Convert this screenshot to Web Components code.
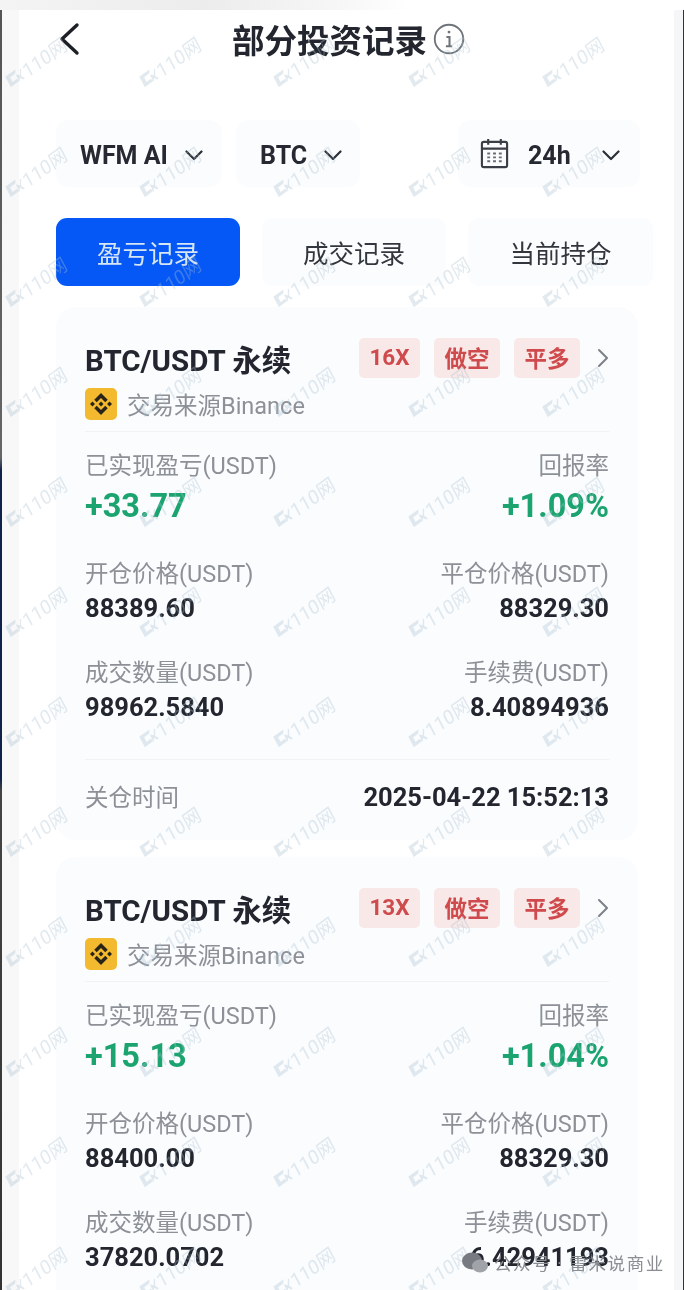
<!DOCTYPE html>
<html lang="zh">
<head>
<meta charset="utf-8">
<title>部分投资记录</title>
<style>
    html, body { margin: 0; height: 1290px; overflow: hidden; background: #f6f7f8; }
    body { font-family: Roboto, "Noto Sans CJK SC", sans-serif; color: #23262e; }
    .page { filter: blur(.7px); }
</style>
</head>
<body>
<div class="page">
<app-frame>
    <nav-header>部分投资记录</nav-header>
    <filter-bar>
        <filter-pill width="166" pad="24" gap="17">WFM AI</filter-pill>
        <filter-pill width="124" pad="24" gap="17">BTC</filter-pill>
        <filter-pill width="182" pad="22" gap="31" calendar style="margin-left:auto">24h</filter-pill>
    </filter-bar>
    <tab-bar>
        <tab-item active>盈亏记录</tab-item>
        <tab-item>成交记录</tab-item>
        <tab-item>当前持仓</tab-item>
    </tab-bar>
    <record-card leverage="16X" pnl="+33.77" rate="+1.09%" open="88389.60" close="88329.30" qty="98962.5840" fee="8.40894936" time="2025-04-22 15:52:13"></record-card>
    <record-card leverage="13X" pnl="+15.13" rate="+1.04%" open="88400.00" close="88329.30" qty="37820.0702" fee="6.42941193" time="2025-04-22 15:52:13"></record-card>
</app-frame>
<water-marks></water-marks>
<source-stamp>公众号 · 雷米说商业</source-stamp>
</div>

<script>
const chevronDown = `<svg width="18" height="11" viewBox="0 0 18 11" fill="none" stroke="#2b2f37" stroke-width="2.2" stroke-linecap="round" stroke-linejoin="round"><path d="M1.5 1.5 9 9l7.5-7.5"/></svg>`;

class AppFrame extends HTMLElement {
    constructor() {
        super();
        this.attachShadow({ mode: 'open' }).innerHTML = `
            <style>
                :host { display: block; height: 1290px; overflow: hidden; }
                .top { height: 10px; background: linear-gradient(90deg, #f4f4f4, #ececec 30%, #f7f7f7 50%, #fff 60%); }
                .body { display: flex; height: 1280px; }
                .left { width: 19px; background: #f8f8f9; border-left: 2px solid; box-sizing: border-box;
                    border-image: linear-gradient(#555 0, #666 35%, #10224a 36%, #10224a 60%, #444 61%, #333 100%) 1; }
                .main { width: 655px; box-sizing: border-box; padding: 0 21px 0 37px; background: #fff; }
                .right { width: 10px; background: #f5f6f7; border-right: 1px solid #333; box-sizing: border-box; }
            </style>
            <div class="top"></div>
            <div class="body">
                <div class="left"></div>
                <div class="main"><slot></slot></div>
                <div class="right"></div>
            </div>`;
    }
}

class NavHeader extends HTMLElement {
    constructor() {
        super();
        this.attachShadow({ mode: 'open' }).innerHTML = `
            <style>
                :host { display: grid; grid-template-columns: 176px auto; align-items: center; height: 62px; margin-bottom: 48px; }
                .back { padding-left: 1px; margin-bottom: 5px; display: flex; }
                .title { display: flex; align-items: center; gap: 6px; margin-bottom: 5px; font-size: 32.5px; font-weight: 700; color: #23262e; }
            </style>
            <div class="back">
                <svg width="24" height="34" viewBox="0 0 24 34" fill="none" stroke="#1d2026" stroke-width="3.4" stroke-linecap="round" stroke-linejoin="round"><path d="M20 3 5 17l15 14"/></svg>
            </div>
            <div class="title">
                <slot></slot>
                <svg width="32" height="32" viewBox="0 0 31 31" fill="none" stroke="#6f747b"><circle cx="15.5" cy="15.5" r="13.8" stroke-width="1.8"/><path d="M13 13.5h3v9M12.5 22.5h6" stroke-width="2"/><circle cx="15.5" cy="8.8" r="1.4" fill="#6f747b" stroke="none"/></svg>
            </div>`;
    }
}

class FilterBar extends HTMLElement {
    constructor() {
        super();
        this.attachShadow({ mode: 'open' }).innerHTML = `
            <style>
                :host { display: flex; gap: 14px; height: 67px; margin: 0 13px 31px 0; }
            </style>
            <slot></slot>`;
    }
}

class FilterPill extends HTMLElement {
    constructor() {
        super();
        const calendar = this.hasAttribute('calendar') ? `
            <svg style="margin-right:19px;margin-bottom:3px" width="29" height="31" viewBox="0 0 29 32" fill="none" stroke="#3a3e46" stroke-width="2.2">
                <rect x="1.5" y="4" width="26" height="26" rx="2"/>
                <path d="M1.5 11h26M8 1v6M21 1v6"/>
                <path d="M7 16h3M13 16h3M19 16h3M7 20h3M13 20h3M19 20h3M7 24h3M13 24h3M19 24h3" stroke-width="2" stroke="#6a6e75"/>
            </svg>` : '';
        this.attachShadow({ mode: 'open' }).innerHTML = `
            <style>
                :host { display: flex; align-items: center; box-sizing: border-box; border-radius: 13px; background: #fbfcfd;
                    width: ${this.getAttribute('width')}px; padding: 3px 0 0 ${this.getAttribute('pad')}px;
                    font-size: 25px; font-weight: 700; color: #262932; }
                svg.down { margin-left: ${this.getAttribute('gap')}px; }
            </style>
            ${calendar}<slot></slot>${chevronDown.replace('<svg', '<svg class="down"')}`;
    }
}

class TabBar extends HTMLElement {
    constructor() {
        super();
        this.attachShadow({ mode: 'open' }).innerHTML = `
            <style>
                :host { display: grid; grid-template-columns: 184px 184px 185px; gap: 22px; height: 68px; margin-bottom: 21px; }
            </style>
            <slot></slot>`;
    }
}

class TabItem extends HTMLElement {
    constructor() {
        super();
        this.attachShadow({ mode: 'open' }).innerHTML = `
            <style>
                :host { display: flex; align-items: center; justify-content: center; border-radius: 11px; padding-bottom: 2px; box-sizing: border-box;
                    background: #fbfcfd; color: #33363d; font-size: 25.5px; }
                :host([active]) { background: #0558f5; color: #d6e6f5; }
            </style>
            <slot></slot>`;
    }
}

class TradeTag extends HTMLElement {
    constructor() {
        super();
        this.attachShadow({ mode: 'open' }).innerHTML = `
            <style>
                :host { display: flex; align-items: center; justify-content: center; height: 40px; border-radius: 5px; box-sizing: border-box; padding-bottom: 2px;
                    background: #f8e8e8; color: #cf4a4c; font-size: 22.5px; font-weight: 700; }
            </style>
            <slot></slot>`;
    }
}

class StatCell extends HTMLElement {
    constructor() {
        super();
        this.attachShadow({ mode: 'open' }).innerHTML = `
            <style>
                :host { display: block; }
                :host([end]) { text-align: right; }
                .label { height: 32px; line-height: 32px; font-size: 23.5px; color: #8d9096; white-space: nowrap; }
                .value { height: 35px; line-height: 37px; font-size: 25.5px; font-weight: 700; color: #23262e; white-space: nowrap; }
                :host([big]) .value { height: 44px; line-height: 48px; font-size: 32.5px; color: #1ba46f; }
            </style>
            <div class="label"><slot name="label"></slot></div>
            <div class="value"><slot name="value"></slot></div>`;
    }
}

class RecordCard extends HTMLElement {
    constructor() {
        super();
        this.attachShadow({ mode: 'open' });
    }

    connectedCallback() {
        const a = name => this.getAttribute(name);
        const cell = (label, value, attrs = '') =>
            `<stat-cell ${attrs}><span slot="label">${label}</span><span slot="value">${value}</span></stat-cell>`;
        this.shadowRoot.innerHTML = `
            <style>
                :host { display: block; box-sizing: border-box; width: 582px; height: 533px; margin-bottom: 17px;
                    padding: 31px 29px 0; border-radius: 20px; background: #fafcfe; }
                .head { display: flex; align-items: center; height: 40px; }
                .name { flex: 1; font-size: 29.5px; font-weight: 700; color: #23262e; margin-bottom: 1px; white-space: nowrap; }
                .tags { display: grid; grid-template-columns: 61px 66px 66px; gap: 14px; }
                .more { margin-left: 17px; display: flex; }
                .source { display: flex; align-items: center; gap: 10px; height: 32px; margin-top: 10px; font-size: 23.5px; color: #8d9096; }
                .logo { width: 32px; height: 32px; border-radius: 5px; background: #f3ba2f; display: flex; align-items: center; justify-content: center; }
                hr { border: 0; height: 1px; background: #f0f3f6; margin: 0; }
                .grid { display: grid; grid-template-columns: 1fr 1fr; row-gap: 32px; margin-top: 18px; }
                .closed { display: flex; justify-content: space-between; align-items: center; height: 32px; margin-top: 21px; }
                .closed span:first-child { font-size: 23.5px; color: #8d9096; margin-bottom: 3px; }
                .closed span:last-child { font-size: 25.5px; font-weight: 700; color: #23262e; }
            </style>
            <div class="head">
                <div class="name">BTC/USDT 永续</div>
                <div class="tags">
                    <trade-tag>${a('leverage')}</trade-tag>
                    <trade-tag>做空</trade-tag>
                    <trade-tag>平多</trade-tag>
                </div>
                <div class="more">
                    <svg width="12" height="20" viewBox="0 0 12 20" fill="none" stroke="#7c8087" stroke-width="2" stroke-linecap="round" stroke-linejoin="round"><path d="M2 2l8 8-8 8"/></svg>
                </div>
            </div>
            <div class="source">
                <div class="logo">
                    <svg width="22" height="22" viewBox="0 0 32 32" fill="#2a2418">
                        <path d="M9.8 13.4 16 7.2l6.2 6.2 3.6-3.6L16 0 6.2 9.8z"/>
                        <path d="M0 16l3.6-3.6L7.2 16l-3.6 3.6z"/>
                        <path d="M9.8 18.6 16 24.8l6.2-6.2 3.6 3.6L16 32l-9.8-9.8z"/>
                        <path d="M24.8 16l3.6-3.6L32 16l-3.6 3.6z"/>
                        <path d="M19.65 16 16 12.35 12.35 16 16 19.65z"/>
                    </svg>
                </div>
                <span>交易来源Binance</span>
            </div>
            <hr style="margin-top:11px">
            <div class="grid">
                ${cell('已实现盈亏(USDT)', a('pnl'), 'big')}
                ${cell('回报率', a('rate'), 'big end')}
                ${cell('开仓价格(USDT)', a('open'))}
                ${cell('平仓价格(USDT)', a('close'), 'end')}
                ${cell('成交数量(USDT)', a('qty'))}
                ${cell('手续费(USDT)', a('fee'), 'end')}
            </div>
            <hr style="margin-top:35px">
            <div class="closed"><span>关仓时间</span><span>${a('time')}</span></div>`;
    }
}

// Tiled site watermark over the whole page
class WaterMarks extends HTMLElement {
    constructor() {
        super();
        const mark = `
            <div class="mark">
                <svg width="21" height="19" viewBox="0 0 17 15"><path d="M0 2h12l-2 3H4v5h5l1 3H0z" fill="currentColor"/><path d="M10 6l3 3 3-5 1 1-3 5 2 4h-2l-2-3-2 3z" fill="currentColor"/></svg>
                <span>110网</span>
            </div>`;
        this.attachShadow({ mode: 'open' }).innerHTML = `
            <style>
                :host { position: absolute; left: 1px; top: 26px; width: 671px; height: 1264px; overflow: hidden; pointer-events: none;
                    display: grid; grid-template-columns: repeat(5, 134.2px); grid-auto-rows: 110px; color: rgba(170, 192, 208, .34); }
                .mark { display: flex; align-items: center; gap: 1px; width: 70px; height: 70px; font-size: 19px;
                    transform: rotate(-36deg) skewX(-8deg); white-space: nowrap; }
            </style>
            ${mark.repeat(60)}`;
    }
}

class SourceStamp extends HTMLElement {
    constructor() {
        super();
        this.attachShadow({ mode: 'open' }).innerHTML = `
            <style>
                :host { position: absolute; left: 462px; top: 1250px; display: flex; align-items: center; gap: 6px;
                    font-size: 17.5px; letter-spacing: 1.6px; color: #8a8d92; white-space: nowrap; }
            </style>
            <svg width="26" height="22" viewBox="0 0 26 22" fill="#777a80">
                <ellipse cx="10" cy="9" rx="10" ry="8.5"/><ellipse cx="18" cy="14" rx="8" ry="6.5" fill="#a0a3a8"/>
            </svg>
            <slot></slot>`;
    }
}

customElements.define('app-frame', AppFrame);
customElements.define('nav-header', NavHeader);
customElements.define('filter-bar', FilterBar);
customElements.define('filter-pill', FilterPill);
customElements.define('tab-bar', TabBar);
customElements.define('tab-item', TabItem);
customElements.define('trade-tag', TradeTag);
customElements.define('stat-cell', StatCell);
customElements.define('record-card', RecordCard);
customElements.define('water-marks', WaterMarks);
customElements.define('source-stamp', SourceStamp);
</script>
</body>
</html>
